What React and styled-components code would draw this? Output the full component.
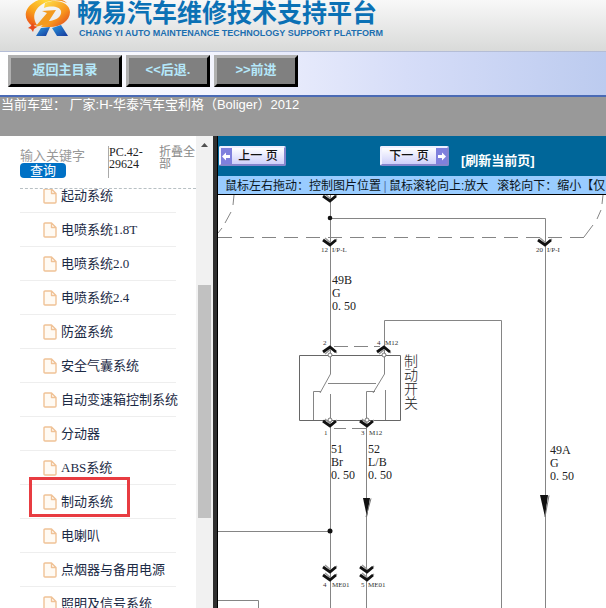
import React from "react";
import styled, { createGlobalStyle, css } from "styled-components";

const GlobalStyle = createGlobalStyle`
  *,
  *::after {
    box-sizing: border-box;
  }

  body {
    margin: 0;
    background-color: white;
    font-family: "Liberation Sans", "Noto Sans CJK SC", sans-serif;
  }
`;

// page
const Page = styled.div`
  display: flex;
  flex-direction: column;
  height: 100vh;
  overflow: hidden;
`;

// header
const Header = styled.header`
  display: flex;
  flex: none;
  align-items: flex-end;
  gap: 7px;
  height: 51px;
  padding: 0 24px 12px;
  background: linear-gradient(#f8f8f8, #d9dad9);
`;

const Brand = styled.div`
  display: flex;
  flex-direction: column;
  white-space: nowrap;
`;

const BrandTitle = styled.h1`
  margin: 0;
  font-size: 25px;
  line-height: 28px;
  font-weight: 700;
  color: #0b71b5;
`;

const BrandSubtitle = styled.p`
  margin: 0;
  padding-left: 2px;
  font-size: 9px;
  line-height: 12px;
  font-weight: 700;
  color: #1c6fb0;
`;

// nav
const Nav = styled.nav`
  display: flex;
  flex: none;
  gap: 4px;
  height: 46px;
  padding: 3px 8px;
  border-top: 1px solid #b4bdd6;
  border-bottom: 2px solid #4a6ab5;
  background: linear-gradient(to right, #ffffff, #f3f4fe 35%, #d6ddf8 67%, #bccbef);
`;

const NavButton = styled.button`
  width: ${(props) => (props.$wide ? "114px" : "84px")};
  height: 32px;
  padding: 0 0 3px;
  border: 3px solid;
  border-color: #b0b0b0 #000000 #000000 #b0b0b0;
  background-color: #808080;
  font-family: inherit;
  font-size: 13px;
  line-height: 20px;
  font-weight: 700;
  color: #b5e8fa;
`;

const ModelBar = styled.div`
  flex: none;
  height: 39px;
  padding-left: 1px;
  background-color: #999999;
  font-size: 13px;
  line-height: 16px;
  color: white;
  white-space: pre;
`;

const Body = styled.div`
  display: flex;
  flex: 1;
  min-height: 0;
`;

// sidebar
const Sidebar = styled.aside`
  display: flex;
  flex: none;
  width: 217px;
  border-right: 4px solid #303030;
  background-color: white;
`;

const SidebarContent = styled.div`
  display: flex;
  flex: 1;
  flex-direction: column;
  min-width: 0;
  padding-left: 20px;
`;

const SearchArea = styled.form`
  display: flex;
  flex: none;
  height: 53px;
  padding-top: 10px;
  border-bottom: 1px dashed #b8c0c4;
`;

const SearchBox = styled.div`
  display: flex;
  flex-direction: column;
  width: 88px;
`;

const SearchInput = styled.input`
  width: 66px;
  height: 17px;
  padding: 1px 0 0;
  border: none;
  outline: none;
  font-family: inherit;
  font-size: 13px;

  &::placeholder {
    color: #999999;
  }
`;

const SearchButton = styled.button`
  width: 46px;
  height: 15px;
  padding: 0;
  border: none;
  border-radius: 4px;
  background-color: #0071c5;
  font-family: inherit;
  font-size: 13px;
  line-height: 15px;
  color: white;
`;

const CodeText = styled.div`
  width: 51px;
  height: 32px;
  border-left: 1px solid #aaaaaa;
  font-family: "Liberation Serif", serif;
  font-size: 12px;
  line-height: 12px;
  color: #222222;
`;

const FoldButton = styled.button`
  width: 37px;
  height: 24px;
  padding: 0;
  border: none;
  background: none;
  font-family: inherit;
  font-size: 12px;
  line-height: 12px;
  color: #888888;
  text-align: left;
`;

const ListArea = styled.div`
  flex: 1;
  min-height: 0;
  overflow: hidden;
`;

const SystemList = styled.ul`
  width: 156px;
  margin: -10px 0 0;
  padding: 0;
  list-style: none;
`;

const SystemItem = styled.li`
  position: relative;
  height: 34px;
  border-bottom: 1px solid #eeeeee;

  ${(props) =>
    props.$marked &&
    css`
      &::after {
        content: "";
        position: absolute;
        top: -8px;
        left: 9px;
        width: 101px;
        height: 40px;
        border: 3px solid #e83c41;
        pointer-events: none;
      }
    `}
`;

const SystemLink = styled.a`
  display: flex;
  align-items: center;
  gap: 4px;
  height: 33px;
  padding-left: 23px;
  font-family: "Liberation Serif", "Noto Sans CJK SC", serif;
  font-size: 13px;
  line-height: 20px;
  color: #1b2a45;
  text-decoration: none;
  white-space: nowrap;

  svg {
    flex: none;
  }
`;

const Scrollbar = styled.div`
  display: flex;
  flex: none;
  flex-direction: column;
  width: 17px;
  padding: 0 2px;
  background-color: #f1f1f1;
`;

const ScrollArrow = styled.span`
  align-self: center;
  height: 9px;
  margin: 7px 0 0;
  font-size: 0;
`;

const ScrollGap = styled.div`
  flex: ${(props) => props.$size};
`;

const ScrollThumb = styled.div`
  flex: 233;
  background-color: #c1c1c1;
`;

// viewer
const Viewer = styled.main`
  display: flex;
  flex: 1;
  flex-direction: column;
  min-width: 0;
  border-left: 1px solid #000000;
  background-color: white;
`;

const Pager = styled.div`
  display: flex;
  flex: none;
  align-items: center;
  height: 40px;
  padding-left: 1px;
  background-color: #006699;
  white-space: nowrap;
`;

const PageButton = styled.button`
  display: flex;
  align-items: stretch;
  width: ${(props) => (props.$next ? "69px" : "67px")};
  height: 20px;
  margin-right: ${(props) => (props.$next ? "12px" : "94px")};
  padding: 0;
  border: 2px solid;
  border-color: #f0f0ff #8585cc #8585cc #f0f0ff;
  border-radius: 2px;
  background: linear-gradient(#ffffff, #cfd0fa);
  font-family: inherit;
  font-size: 12px;
  line-height: 16px;
  font-weight: 500;
  color: #111111;

  span {
    flex: 1;
  }
`;

const ArrowCell = styled.i`
  display: flex;
  align-items: center;
  justify-content: center;
  width: 11px;
  background-color: #7f80dd;
`;

const RefreshLink = styled.a`
  padding-top: 10px;
  font-size: 13px;
  line-height: 16px;
  font-weight: 700;
  color: white;
  text-decoration: none;
`;

const HintBar = styled.div`
  display: flex;
  flex: none;
  height: 19px;
  padding-left: 7px;
  overflow: hidden;
  border-bottom: 1px solid #000000;
  background-color: #99ccff;
  font-size: 12px;
  line-height: 20px;
  color: #0a1420;
  white-space: nowrap;
`;

const HintDivider = styled.span`
  width: 8px;
  color: #5577aa;
  text-align: center;
`;

const HintText = styled.span`
  margin-right: ${(props) => (props.$spaced ? "9px" : "0")};
`;

const DiagramArea = styled.div`
  flex: 1;
  min-height: 0;
  overflow: hidden;

  svg {
    display: block;
    width: 100%;
    height: 100%;
  }
`;

const WireLabel = styled.text`
  font-family: "Liberation Serif", serif;
  font-size: 12px;
  fill: #222222;
`;

const PinLabel = styled.text`
  font-family: "Liberation Serif", serif;
  font-size: 7px;
  fill: #333333;
`;

const PartLabel = styled.text`
  writing-mode: vertical-rl;
  font-family: "Noto Sans CJK SC", sans-serif;
  font-size: 14px;
  font-weight: 300;
  fill: #222222;
`;

const systems = [
  { name: "起动系统" },
  { name: "电喷系统1.8T" },
  { name: "电喷系统2.0" },
  { name: "电喷系统2.4" },
  { name: "防盗系统" },
  { name: "安全气囊系统" },
  { name: "自动变速箱控制系统" },
  { name: "分动器" },
  { name: "ABS系统" },
  { name: "制动系统", marked: true },
  { name: "电喇叭" },
  { name: "点烟器与备用电源" },
  { name: "照明及信号系统" },
];

const wireLabels = [
  { x: 332, y: 284, lines: ["49B", "G", "0. 50"] },
  { x: 331, y: 453, lines: ["51", "Br", "0. 50"] },
  { x: 368, y: 453, lines: ["52", "L/B", "0. 50"] },
  { x: 550, y: 454, lines: ["49A", "G", "0. 50"] },
];

const pinLabels = [
  { x: 321, y: 252, text: "12" },
  { x: 332, y: 252, text: "I/P-L" },
  { x: 536, y: 252, text: "20" },
  { x: 547, y: 252, text: "I/P-I" },
  { x: 323, y: 345, text: "2" },
  { x: 377, y: 345, text: "4" },
  { x: 385, y: 345, text: "M12" },
  { x: 324, y: 435, text: "1" },
  { x: 361, y: 435, text: "3" },
  { x: 369, y: 435, text: "M12" },
  { x: 323, y: 587, text: "4" },
  { x: 332, y: 587, text: "ME01" },
  { x: 361, y: 587, text: "5" },
  { x: 368, y: 587, text: "ME01" },
];

function Logo() {
  return (
    <svg width="46" height="40" viewBox="24 -1 46 40" aria-hidden="true">
      <defs>
        <linearGradient id="ring" x1="0" y1="1" x2="1" y2="0">
          <stop offset="0" stopColor="#e8431c" />
          <stop offset="0.35" stopColor="#f9a11b" />
          <stop offset="0.7" stopColor="#ffd83a" />
          <stop offset="1" stopColor="#ee6a1b" />
        </linearGradient>
        <linearGradient id="bowl" x1="0" y1="0" x2="1" y2="1">
          <stop offset="0" stopColor="#ffe94f" />
          <stop offset="0.6" stopColor="#f7941d" />
          <stop offset="1" stopColor="#dd3c1e" />
        </linearGradient>
        <linearGradient id="leg" x1="0" y1="0" x2="1" y2="1">
          <stop offset="0" stopColor="#2b9be0" />
          <stop offset="1" stopColor="#16389b" />
        </linearGradient>
      </defs>
      <path
        d="M32 26 C23 19 24 9 33 3 C43 -4 59 -4 67 3 C58 -1 48 0 41 5 C34 10 32 18 37 25 Z"
        fill="url(#ring)"
      />
      <path
        d="M45 3 C57 -2 70 3 70 12 C70 21 60 27 50 27 L41 27 L46 21 L50 21 C57 20 62 16 61 11 C60 7 52 5 44 8 Z"
        fill="url(#bowl)"
      />
      <path d="M42 11 L56 10 L47 24 L35 27 L47 13 Z" fill="#f39a1e" />
      <path d="M41 28 L50 27 L46 36 L36 36 Z" fill="url(#leg)" />
      <path d="M52 28 L61 25 L68 36 L57 36 Z" fill="url(#leg)" />
      <path
        d="M33 23 L34 26 L37 27 L34 29 L33 32 L31 29 L28 28 L31 26 Z"
        fill="#e94b1c"
      />
    </svg>
  );
}

function FileIcon() {
  return (
    <svg width="14" height="16" viewBox="0 0 14 16" aria-hidden="true">
      <path
        d="M2 1 H8.5 L13 5.5 V14 Q13 15 12 15 H2 Q1 15 1 14 V2 Q1 1 2 1 Z M8.5 1 V5.5 H13"
        fill="#fffaf3"
        stroke="#f0c296"
        strokeWidth="1.4"
        strokeLinejoin="round"
      />
    </svg>
  );
}

function PageArrow({ right }) {
  return (
    <ArrowCell>
      <svg width="9" height="9" viewBox="0 0 9 9" aria-hidden="true">
        <path
          d={
            right
              ? "M9 4.5 L5 0.5 V3 H1 V6 H5 V8.5 Z"
              : "M0 4.5 L4 0.5 V3 H8 V6 H4 V8.5 Z"
          }
          fill="white"
        />
      </svg>
    </ArrowCell>
  );
}

// connector arrow, the tip is at x / y
function Chevron({ x, y, up }) {
  const d = up ? 1 : -1;
  return (
    <g fill="none">
      <path
        d={`M${x - 5} ${y + 9 * d} L${x + 1} ${y + 4 * d} L${x + 7} ${y + 8 * d}`}
        stroke="#999999"
        strokeWidth="1.5"
      />
      <path
        d={`M${x - 7} ${y + 7 * d} L${x} ${y + 2 * d} L${x + 6} ${y + 7 * d}`}
        stroke="#111111"
        strokeWidth="2.8"
      />
    </g>
  );
}

function Diagram() {
  return (
    <svg
      viewBox="218 195 388 413"
      preserveAspectRatio="xMinYMin slice"
      role="img"
      aria-label="制动系统电路图"
    >
      <g fill="none" stroke="#858585">
        <path d="M330.5 195 V355" />
        <path d="M330 218.5 H545.5 V608" />
        <path d="M218 237.5 H584" strokeDasharray="14 8" />
        <path d="M234 195 L233 205 M231 212 L225 223 M222 228 L218 233" />
        <path d="M603 195 L602 204 M601 210 L597 219 M593 225 L584 237" />
        <path d="M384.5 355 V320.5 H501.5 V608" />
        <path d="M334 346.5 H380 M334 428.5 H346 M352 428.5 H366" strokeDasharray="14 6" />
        <path d="M299.5 355.5 H400.5 V420.5 H299.5 Z" stroke="#666666" />
        <path d="M330.5 355 V374 L320 393 M321 391.5 H313.5 V420 M330.5 394 V608" />
        <path d="M384.5 355 V374 L373 393 M375 391.5 H366.5 V608 M385.5 390 V420" />
        <path d="M328 383.5 H376" />
        <path d="M218 531.5 H330 M218 600.5 H258.5 V608" />
      </g>

      <Chevron x={330} y={203} />
      <Chevron x={330} y={247} />
      <Chevron x={545} y={247} />
      <Chevron x={330} y={345} up />
      <Chevron x={384} y={345} up />
      <Chevron x={330} y={428} />
      <Chevron x={367} y={428} />
      <Chevron x={330} y={574} />
      <Chevron x={330} y={582} />
      <Chevron x={367} y={574} />
      <Chevron x={367} y={582} />

      <g fill="white" stroke="#777777">
        <circle cx="330" cy="355" r="2" />
        <circle cx="384" cy="355" r="2" />
        <circle cx="330" cy="420" r="2" />
        <circle cx="367" cy="420" r="2" />
      </g>
      <g fill="#111111">
        <circle cx="330" cy="218" r="2.3" />
        <circle cx="330" cy="531" r="2.5" />
        <path d="M363 498 H370 L367 517 Z" />
        <path d="M540 495 H548 L545 517 Z" />
      </g>
      <path
        d="M366 517 L371 498.5 M545 517 L549 495.5"
        fill="none"
        stroke="#777777"
      />

      {wireLabels.map((label) =>
        label.lines.map((line, i) => (
          <WireLabel key={label.x + line} x={label.x} y={label.y + i * 13}>
            {line}
          </WireLabel>
        ))
      )}
      {pinLabels.map((pin) => (
        <PinLabel key={`${pin.x}-${pin.y}`} x={pin.x} y={pin.y}>
          {pin.text}
        </PinLabel>
      ))}
      <PartLabel x={411} y={354}>
        制动开关
      </PartLabel>
    </svg>
  );
}

function SystemSidebar() {
  return (
    <Sidebar>
      <SidebarContent>
        <SearchArea onSubmit={(e) => e.preventDefault()}>
          <SearchBox>
            <SearchInput
              type="text"
              placeholder="输入关键字"
              aria-label="输入关键字"
            />
            <SearchButton type="submit">查询</SearchButton>
          </SearchBox>
          <CodeText>
            PC.42-
            <br />
            29624
          </CodeText>
          <FoldButton type="button">折叠全部</FoldButton>
        </SearchArea>
        <ListArea>
          <SystemList>
            {systems.map((system) => (
              <SystemItem key={system.name} $marked={system.marked}>
                <SystemLink href="#">
                  <FileIcon />
                  {system.name}
                </SystemLink>
              </SystemItem>
            ))}
          </SystemList>
        </ListArea>
      </SidebarContent>
      <Scrollbar>
        <ScrollArrow>
          <svg width="7" height="5" viewBox="0 0 7 5" aria-hidden="true">
            <path d="M0 4 L3.5 0 L7 4 Z" fill="#505050" />
          </svg>
        </ScrollArrow>
        <ScrollGap $size={133} />
        <ScrollThumb />
        <ScrollGap $size={90} />
      </Scrollbar>
    </Sidebar>
  );
}

function App() {
  return (
    <>
      <GlobalStyle />
      <Page>
        <Header>
          <Logo />
          <Brand>
            <BrandTitle>畅易汽车维修技术支持平台</BrandTitle>
            <BrandSubtitle>
              CHANG YI AUTO MAINTENANCE TECHNOLOGY SUPPORT PLATFORM
            </BrandSubtitle>
          </Brand>
        </Header>
        <Nav>
          <NavButton $wide>返回主目录</NavButton>
          <NavButton>&lt;&lt;后退.</NavButton>
          <NavButton>&gt;&gt;前进</NavButton>
        </Nav>
        <ModelBar>当前车型： 厂家:H-华泰汽车宝利格（Boliger）2012</ModelBar>
        <Body>
          <SystemSidebar />
          <Viewer>
            <Pager>
              <PageButton>
                <PageArrow />
                <span>上一 页</span>
              </PageButton>
              <PageButton $next>
                <span>下一 页</span>
                <PageArrow right />
              </PageButton>
              <RefreshLink href="#">[刷新当前页]</RefreshLink>
            </Pager>
            <HintBar>
              <HintText>鼠标左右拖动：控制图片位置</HintText>
              <HintDivider>|</HintDivider>
              <HintText $spaced>鼠标滚轮向上:放大</HintText>
              <HintText>滚轮向下：缩小【仅</HintText>
            </HintBar>
            <DiagramArea>
              <Diagram />
            </DiagramArea>
          </Viewer>
        </Body>
      </Page>
    </>
  );
}

export default App;
